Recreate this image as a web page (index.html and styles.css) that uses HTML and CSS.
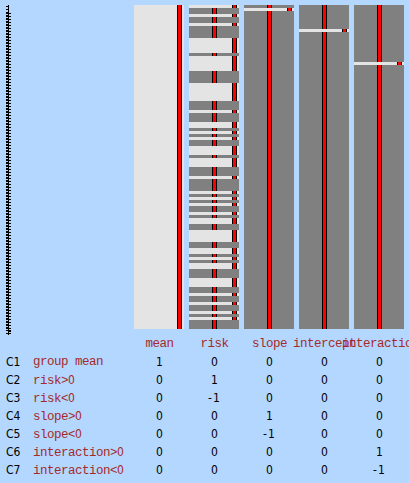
FILE: index.html
```html
<!DOCTYPE html>
<html lang="en">
<head>
<meta charset="utf-8">
<title>Design matrix</title>
<link rel="stylesheet" href="styles.css">
</head>
<body>
<main>
  <section class="design">
    <svg class="axis" width="5" height="330" shape-rendering="crispEdges" aria-hidden="true">
      <path d="M2 0h1v330H2zM0 1h2v1H0zM0 4h2v1H0z"/>
      <path d="M1 7V324" stroke="#000" stroke-width="2" stroke-dasharray="2 1"/>
      <path d="M4 8V327" stroke="#000" stroke-width="2" stroke-dasharray="1 2"/>
      <path d="M0 325h5v1H0zM0 328h5v1H0z"/>
    </svg>
    <div class="columns" id="columns"></div>
  </section>
  <section class="contrasts" id="contrasts"></section>
</main>
<script src="script.js"></script>
</body>
</html>
```
FILE: styles.css
```css
html, body {
  margin: 0;
  height: 100%;
  overflow: hidden;
  background: #b3d7ff;
}

main {
  padding: 5px 0 0 6px;
  width: 398px;
}

.design {
  display: flex;
  justify-content: space-between;
  height: 330px;
}

.axis {
  display: block;
}

.columns {
  display: flex;
  gap: 5px;
  height: 324px;
}

.column {
  width: 50px;
}

.run {
  background: linear-gradient(90deg, #808080 23px, #000 23px 24px, #f00 24px 27px, #000 27px 28px, #808080 28px);
}

.run.on {
  background: linear-gradient(90deg, #e4e4e4 43px, #000 43px 44px, #f00 44px 47px, #000 47px 48px, #e4e4e4 48px);
}

.row {
  display: grid;
  grid-template-columns: 27px 99px repeat(5, 55px);
  height: 18px;
  line-height: 18px;
  white-space: nowrap;
  font-family: "DejaVu Sans Condensed", "DejaVu Sans", sans-serif;
  font-stretch: condensed;
  font-size: 12px;
  color: #000;
}

.name,
.regressor {
  font-family: "Liberation Mono", monospace;
  font-size: 12.5px;
  letter-spacing: -0.5px;
  color: #a52a2a;
}

.digit {
  font-family: "DejaVu Sans Condensed", "DejaVu Sans", sans-serif;
  font-stretch: condensed;
  font-size: 12px;
}

.regressor,
.weight {
  display: flex;
  justify-content: center;
}

.regressor:last-child {
  padding-left: 2px;
}

.weight.negative {
  letter-spacing: 1px;
}
```
FILE: script.js
```js
// Run lengths in design rows, alternating off and on, starting with off.
const regressors = [
  { name: 'mean', runs: [0, 108] },
  { name: 'risk', runs: [0, 1, 2, 1, 2, 1, 4, 5, 1, 5, 4, 6, 3, 1, 3, 2, 1, 1, 1, 1, 2, 3, 1, 3, 3, 1, 4, 1, 1, 1, 1, 1, 2, 1, 1, 2, 2, 4, 2, 2, 1, 1, 1, 2, 3, 3, 2, 1, 2, 1, 2, 1, 1, 1, 3] },
  { name: 'slope', runs: [1, 1, 106] },
  { name: 'intercept', runs: [8, 1, 99] },
  { name: 'interaction', runs: [19, 1, 88] }
];

const contrasts = [
  ['C1', 'group mean', [1, 0, 0, 0, 0]],
  ['C2', 'risk&gt;0', [0, 1, 0, 0, 0]],
  ['C3', 'risk&lt;0', [0, -1, 0, 0, 0]],
  ['C4', 'slope&gt;0', [0, 0, 1, 0, 0]],
  ['C5', 'slope&lt;0', [0, 0, -1, 0, 0]],
  ['C6', 'interaction&gt;0', [0, 0, 0, 0, 1]],
  ['C7', 'interaction&lt;0', [0, 0, 0, 0, -1]]
];

document.getElementById('columns').innerHTML = regressors.map(r =>
  '<div class="column">' + r.runs.map((n, i) =>
    `<div class="run${i % 2 ? ' on' : ''}" style="height:${n * 3}px"></div>`).join('') + '</div>').join('');

const header = '<div class="row"><span></span><span></span>' +
  regressors.map(r => `<span class="regressor">${r.name}</span>`).join('') + '</div>';

document.getElementById('contrasts').innerHTML = header + contrasts.map(([id, name, weights]) =>
  `<div class="row"><span>${id}</span><span class="name">${name.replace('0', '<span class="digit">0</span>')}</span>` +
  weights.map(w => `<span class="weight${w < 0 ? ' negative' : ''}">${w}</span>`).join('') + '</div>').join('');
```
